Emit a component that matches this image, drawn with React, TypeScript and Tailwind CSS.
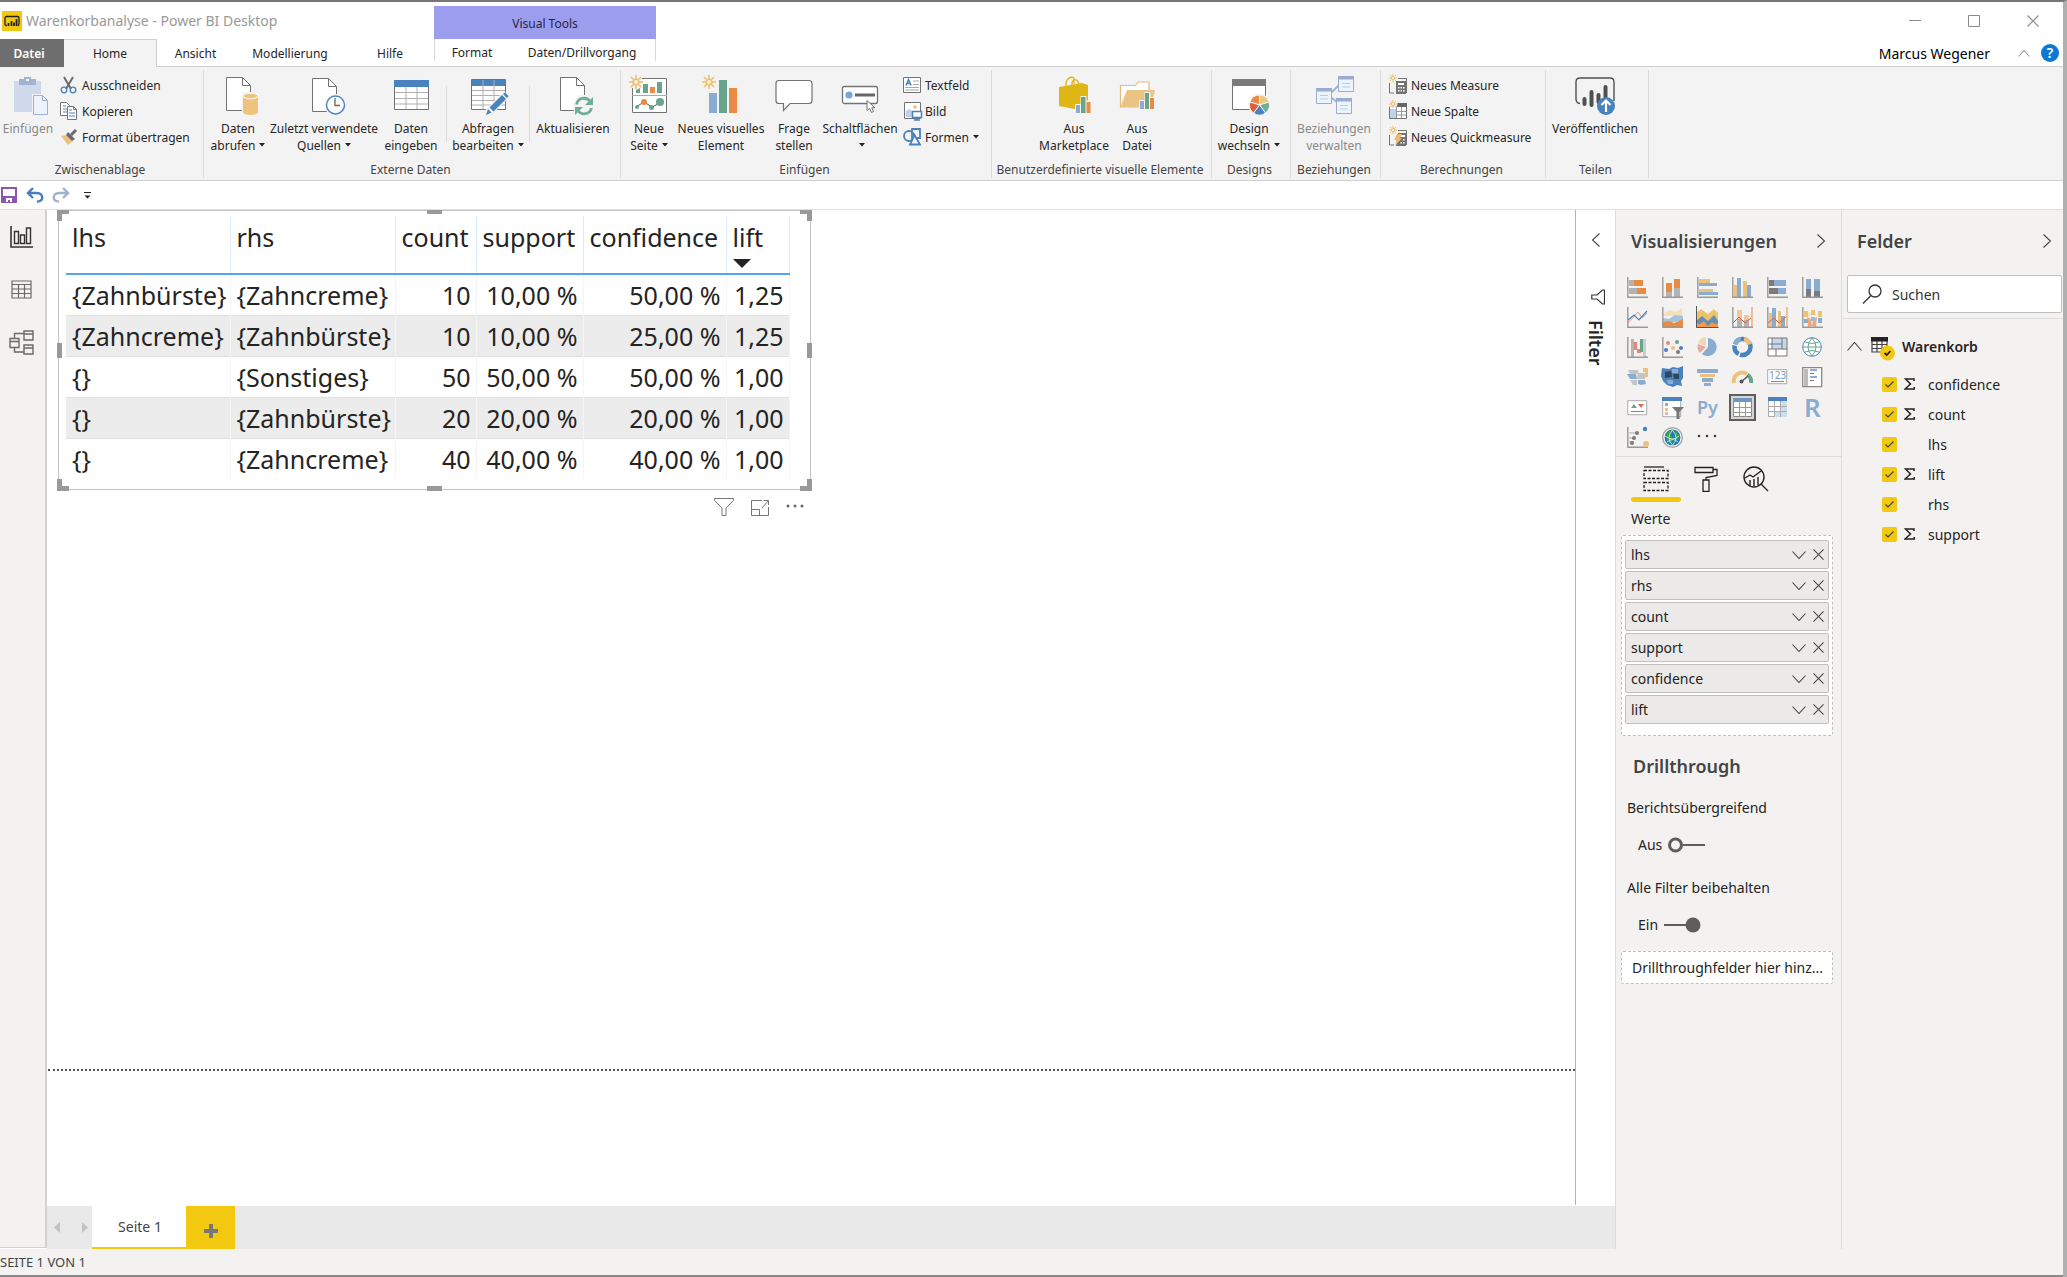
import React, { useState } from 'react';
import clsx from 'clsx';

const RIBBON_TEXT = 'text-[12px] leading-[17px]';

interface RowData {
  lhs: string;
  rhs: string;
  count: string;
  support: string;
  confidence: string;
  lift: string;
}

const rows: RowData[] = [
  { lhs: '{Zahnbürste}', rhs: '{Zahncreme}', count: '10', support: '10,00 %', confidence: '50,00 %', lift: '1,25' },
  { lhs: '{Zahncreme}', rhs: '{Zahnbürste}', count: '10', support: '10,00 %', confidence: '25,00 %', lift: '1,25' },
  { lhs: '{}', rhs: '{Sonstiges}', count: '50', support: '50,00 %', confidence: '50,00 %', lift: '1,00' },
  { lhs: '{}', rhs: '{Zahnbürste}', count: '20', support: '20,00 %', confidence: '20,00 %', lift: '1,00' },
  { lhs: '{}', rhs: '{Zahncreme}', count: '40', support: '40,00 %', confidence: '40,00 %', lift: '1,00' },
];

const fields = [
  { name: 'confidence', numeric: true },
  { name: 'count', numeric: true },
  { name: 'lhs', numeric: false },
  { name: 'lift', numeric: true },
  { name: 'rhs', numeric: false },
  { name: 'support', numeric: true },
];

const values = ['lhs', 'rhs', 'count', 'support', 'confidence', 'lift'];

/* ---------- shared drawing parts ---------- */

function Page({ x, y }: { x: number; y: number }) {
  return (
    <g transform={`translate(${x} ${y})`} fill="#fff" stroke="#737373">
      <path d="M.5.5h16l8 8v25h-24z" />
      <path d="M16.500.5v8h8" fill="none" />
    </g>
  );
}

function Sun({ x, y, s = 1 }: { x: number; y: number; s?: number }) {
  return (
    <g transform={`translate(${x} ${y}) scale(${s})`} stroke="#ecc06e" strokeWidth="1.6" fill="#f9f1e0">
      <path d="M0-7V-3M0 3V7M-7 0H-3M3 0H7M-5-5-2.500-2.500M2.500 2.500 5 5M5-5 2.500-2.500M-2.500 2.500-5 5" />
      <circle r="2.800" />
    </g>
  );
}

function Big({ children }: { children: React.ReactNode }) {
  return (
    <svg width="40" height="40" viewBox="0 0 40 40" fill="none" className="shrink-0 overflow-visible">
      {children}
    </svg>
  );
}

function Small({ children, size = 18 }: { children: React.ReactNode; size?: number }) {
  return (
    <svg width={size} height={size} viewBox={`0 0 ${size} ${size}`} fill="none" className="shrink-0 overflow-visible">
      {children}
    </svg>
  );
}

const Caret = () => (
  <svg width="6" height="4" viewBox="0 0 6 4" className="inline-block ml-1 mb-[3px]">
    <path d="M0 0h6L3 3.500z" fill="#222" />
  </svg>
);

function Chevron({ dir, w = 14, h = 8, color = '#444' }: { dir: 'up' | 'down' | 'left' | 'right'; w?: number; h?: number; color?: string }) {
  const d = {
    up: `M.5 ${h - 0.5}L${w / 2} .5L${w - 0.5} ${h - 0.5}`,
    down: `M.5 .5L${w / 2} ${h - 0.5}L${w - 0.5} .5`,
    left: `M${w - 0.5} .5L.5 ${h / 2}L${w - 0.5} ${h - 0.5}`,
    right: `M.5 .5L${w - 0.5} ${h / 2}L.5 ${h - 0.5}`,
  }[dir];
  return (
    <svg width={w} height={h} viewBox={`0 0 ${w} ${h}`} fill="none" stroke={color} strokeWidth="1.100">
      <path d={d} />
    </svg>
  );
}

const X = ({ s, color }: { s: number; color: string }) => (
  <svg width={s} height={s} viewBox="0 0 12 12" fill="none" stroke={color} strokeWidth="1.100">
    <path d="M.5.5l11 11M11.500.5l-11 11" />
  </svg>
);

/* ---------- ribbon ---------- */

interface BigButtonProps {
  icon: React.ReactNode;
  line1: string;
  line2?: string;
  caret?: boolean;
  disabled?: boolean;
  width: string;
}

function BigButton({ icon, line1, line2, caret, disabled, width }: BigButtonProps) {
  return (
    <button
      disabled={disabled}
      className={clsx('flex flex-col items-center shrink-0 whitespace-nowrap pt-[6px]', RIBBON_TEXT, width, disabled ? 'text-[#8a8a8a]' : 'text-[#262626]')}
    >
      {icon}
      <span className="mt-1">{line1}</span>
      <span>
        {line2}
        {caret && <Caret />}
      </span>
    </button>
  );
}

function SmallButton({ icon, label, caret }: { icon: React.ReactNode; label: string; caret?: boolean }) {
  return (
    <button className={clsx('flex items-center gap-1 h-[26px] whitespace-nowrap text-[#262626]', RIBBON_TEXT)}>
      {icon}
      <span>
        {label}
        {caret && <Caret />}
      </span>
    </button>
  );
}

function Group({ label, width, children }: { label: string; width: string; children: React.ReactNode }) {
  return (
    <div className={clsx('flex flex-col shrink-0 mt-[3px] mb-[2px] border-r border-[#dcdcdc]', width)}>
      <div className="flex flex-1 items-start">{children}</div>
      <div className={clsx('pr-[3px] text-center text-[#444] whitespace-nowrap', RIBBON_TEXT)}>{label}</div>
    </div>
  );
}

const InnerDivider = () => <div className="w-px h-14 mt-4 bg-[#dcdcdc] shrink-0" />;

const icons = {
  paste: (
    <Big>
      <path d="M6 5h27v31H6z" fill="#cfd9ea" />
      <path d="M11 3h5V1h7v2h5v6H11z" fill="#a2b3d2" />
      <path d="M18 3h3v2h-3z" fill="#f3f3f3" />
      <path d="M25.500 19.500h9l5 5v14h-14z" fill="#ecf3fc" stroke="#f3f3f3" strokeWidth="3" />
      <path d="M25.500 19.500h9l5 5v14h-14zM34.500 19.500v5h5" fill="#ecf3fc" stroke="#9bb0d2" />
    </Big>
  ),
  cut: (
    <Small>
      <path d="M4 1l7 12M13 1L6 13" stroke="#6b6b6b" strokeWidth="2" />
      <circle cx="4" cy="14" r="2.800" stroke="#4a82bd" strokeWidth="1.300" />
      <circle cx="13" cy="14" r="2.800" stroke="#4a82bd" strokeWidth="1.300" />
    </Small>
  ),
  copy: (
    <Small>
      <path d="M.5.5h6l3 3v10h-9z" fill="#fff" stroke="#737373" />
      <path d="M3 4h3M3 7h4M3 10h4" stroke="#4a82bd" />
      <path d="M7.500 4.500h6l3 3v10h-9z" fill="#fff" stroke="#737373" />
      <path d="M9 8h3M9 11h6M9 14h6M13.500 4.500v3h3" stroke="#4a82bd" />
    </Small>
  ),
  brush: (
    <Small>
      <path d="M1 8l6-1 6 6-5 4z" fill="#ecc183" />
      <path d="M8 4l7 7-3 2-6-6z" fill="#6b6b6b" />
      <path d="M11 7l5-5" stroke="#6b6b6b" strokeWidth="3" />
    </Small>
  ),
  getData: (
    <Big>
      <Page x={8} y={1} />
      <path d="M24 16h17v24H24z" fill="#f3f3f3" />
      <path d="M25 20v16c0 4 15 4 15 0V20z" fill="#eec47c" />
      <ellipse cx="32.500" cy="20" rx="7.500" ry="2.800" fill="#eec47c" stroke="#fff" />
    </Big>
  ),
  recent: (
    <Big>
      <Page x={8} y={2} />
      <circle cx="31.500" cy="29" r="9" fill="#fff" stroke="#f3f3f3" strokeWidth="4" />
      <circle cx="31.500" cy="29" r="9" fill="#fff" stroke="#4a82bd" strokeWidth="1.400" />
      <path d="M31 22v7.500h5" stroke="#666" strokeWidth="1.300" />
    </Big>
  ),
  enterData: (
    <Big>
      <path d="M3.500 4.500h34v29h-34z" fill="#fff" stroke="#737373" />
      <path d="M3 4h35v7H3z" fill="#4a82bd" />
      <path d="M15 11v22M26 11v22M4 16.500h33M4 22.500h33M4 28h33" stroke="#b0b0b0" />
    </Big>
  ),
  editQueries: (
    <Big>
      <path d="M3.500 3.500h34v30h-34z" fill="#fff" stroke="#737373" />
      <path d="M4 4h33v6H4z" fill="#4a82bd" />
      <path d="M15 4v29M26 4v29M4 14.500h33M4 19.500h33M4 24.500h33M4 29h33" stroke="#b0b0b0" />
      <path d="M19 38L39 18" stroke="#f3f3f3" strokeWidth="8" />
      <path d="M18 39l2-6 3.500 3.500zM21.500 31.500L34 19l4 4-12.500 12.500zM35 18l2-1.500 3.500 3.500-1.500 2z" fill="#4a82bd" />
    </Big>
  ),
  refresh: (
    <Big>
      <Page x={7} y={1} />
      <circle cx="31" cy="30" r="11" fill="#f3f3f3" />
      <path d="M23.500 28.500c1.500-7 10-8.500 14-2.500M38.500 32c-1.500 6.500-10 8-14 2" stroke="#6fae96" strokeWidth="2.800" />
      <path d="M40 21v8h-8zM22 39v-8h8z" fill="#6fae96" />
    </Big>
  ),
  newPage: (
    <Big>
      <path d="M3.500 2.500h34v34h-34z" fill="#fff" stroke="#737373" />
      <path d="M3 19.500h35" stroke="#aaa" />
      <path d="M7 17v-3l4-2v5zM14 8h5v9h-5zM28 6h5v11h-5z" fill="#68a58c" />
      <path d="M21 11h5v6h-5z" fill="#e98b45" />
      <path d="M7 31l8-5 8 5 8-4" stroke="#555" />
      <circle cx="8" cy="31" r="2" fill="#68a58c" />
      <circle cx="15" cy="26" r="3" fill="#e98b45" />
      <circle cx="22.500" cy="31.500" r="2.500" fill="#68a58c" />
      <circle cx="31" cy="26" r="4" fill="#68a58c" />
      <circle cx="7" cy="6" r="7" fill="#f3f3f3" />
      <Sun x={7} y={6} />
    </Big>
  ),
  newVisual: (
    <Big>
      <path d="M8 17h8v20H8z" fill="#8bacd2" />
      <path d="M18 4h8v33h-8z" fill="#68a58c" />
      <path d="M28 12h8v25h-8z" fill="#e98b45" />
      <Sun x={8} y={6} />
    </Big>
  ),
  ask: (
    <Big>
      <path d="M5 4.500h30q3 0 3 3v17q0 3-3 3H16L9.500 34.500V27.500H5q-3 0-3-3v-17q0-3 3-3z" fill="#fff" stroke="#737373" strokeWidth="1.200" />
    </Big>
  ),
  buttons: (
    <Big>
      <rect x="2.500" y="10.500" width="35" height="17" rx="2" fill="#fff" stroke="#737373" strokeWidth="1.300" />
      <circle cx="9" cy="19" r="3.600" fill="#71a8d8" />
      <path d="M15 19h20" stroke="#666" strokeWidth="3" />
      <path d="M27 24.500v10l2.500-2 2 4 2-1-1.700-3.700h3z" fill="#fff" stroke="#737373" />
    </Big>
  ),
  textbox: (
    <Small>
      <path d="M.5 1.500h17v15H.5z" fill="#fff" stroke="#737373" />
      <path d="M3 9.500L5.500 3.500L8 9.500M4 7.500h3" stroke="#4a82bd" strokeWidth="1.500" />
      <path d="M10 5h6M10 8.500h6M2 11.500h14M2 14h14" stroke="#aaa" />
    </Small>
  ),
  image: (
    <Small>
      <path d="M1.500 0.500h16v16h-16z" fill="#fff" stroke="#737373" />
      <path d="M3 15V9l3-2 3 2v6z" fill="#bfd0e6" />
      <circle cx="12" cy="5" r="1.800" fill="#ecc06e" />
      <path d="M9.500 9.500h9v6h-9z" fill="#fff" stroke="#4a82bd" strokeWidth="1.500" />
      <path d="M14 15v3M11 18h6" stroke="#4a82bd" strokeWidth="1.500" />
    </Small>
  ),
  shapes: (
    <Small>
      <circle cx="6" cy="8" r="5" stroke="#4a82bd" strokeWidth="1.800" />
      <path d="M9 1h8v9H9z" stroke="#4a82bd" strokeWidth="1.800" />
      <path d="M11.500 7L17 16.500H7z" fill="#f3f3f3" stroke="#4a82bd" strokeWidth="1.800" />
    </Small>
  ),
  marketplace: (
    <Big>
      <path d="M12 10c-1-7 5-10 8-8v6M18 9c-1-6 6-8 7 0" stroke="#dfb613" strokeWidth="1.300" />
      <path d="M5 11l23-4 6 2v21l-8 4-21-4z" fill="#dfb613" />
      <path d="M21 28h5.500v-8h6v4.500h4.500V38H21z" fill="#f3f3f3" />
      <path d="M22 29h4v8h-4z" fill="#8bacd2" />
      <path d="M27 21h4.500v16H27z" fill="#68a58c" />
      <path d="M32.500 26h4v11h-4z" fill="#e98b45" />
    </Big>
  ),
  file: (
    <Big>
      <path d="M3.500 31V9.500h15l2.500-3.500h11v25z" fill="#fff" stroke="#e8bb7c" strokeWidth="1.200" />
      <path d="M3.500 31L10 14h28l-4 17z" fill="#ebc385" />
      <path d="M22 24h5.500v-8h6v5H38v13H22z" fill="#f3f3f3" />
      <path d="M23 25h4v8h-4z" fill="#8bacd2" />
      <path d="M28 17h4v16h-4z" fill="#68a58c" />
      <path d="M33 22h4v11h-4z" fill="#e98b45" />
    </Big>
  ),
  theme: (
    <Big>
      <path d="M3.500 3.500h33v30h-33z" fill="#fff" stroke="#737373" />
      <path d="M3 3h34v7H3z" fill="#7a7a7a" />
      <circle cx="30.500" cy="29" r="11" fill="#f3f3f3" />
      <g stroke="#f3f3f3" strokeWidth="1" transform="translate(30.500 29)">
        <path d="M0 0V-10A10 10 0 0 0-9.500-3z" fill="#e98b45" />
        <path d="M0 0V-10A10 10 0 0 1 9.500-3z" fill="#ecc87c" />
        <path d="M0 0L9.500-3A10 10 0 0 1 6 8z" fill="#6fae96" />
        <path d="M0 0L6 8A10 10 0 0 1-6 8z" fill="#4a82bd" />
        <path d="M0 0L-9.500-3A10 10 0 0 0-6 8z" fill="#dd5f41" />
      </g>
    </Big>
  ),
  relations: (
    <Big>
      <path d="M18 16l8-8M18 22l6 5" stroke="#a2b3d2" strokeWidth="2" />
      {[[2, 12], [24, 0], [22, 22]].map(([x, y]) => (
        <g key={x} transform={`translate(${x} ${y})`}>
          <path d="M.5.5h15v15H.5z" fill="#ecf5fe" stroke="#9bacd0" />
          <path d="M0 0h16v3.500H0z" fill="#9bacd0" />
          <path d="M4 7.500h8M4 11h8" stroke="#b9cbe8" />
        </g>
      ))}
    </Big>
  ),
  measure: (
    <Small>
      <path d="M.5 7v10H5M9 2.500h8.500V17" stroke="#737373" />
      <path d="M7 5h10v13H7z" fill="#737373" />
      <path d="M9 7h6v2H9zM9 11h1.500v1.500H9zM11.500 11H13v1.500h-1.500zM14 11h1.500v1.500H14zM9 14h1.500v1.500H9zM11.500 14H13v1.500h-1.500zM14 14h1.500v1.500H14z" fill="#fff" />
      <Sun x={4} y={2} s={0.6} />
    </Small>
  ),
  column: (
    <Small>
      <path d="M.5 2.500h17v14H.5z" fill="#fff" stroke="#737373" />
      <path d="M7 1h11v4H7z" fill="#666" />
      <path d="M1 7h6v9H1z" fill="#bfd3ea" />
      <path d="M7.500 5v11M12.500 5v11M7 9.500h10M7 13h10" stroke="#999" />
      <circle cx="4" cy="2" r="4.500" fill="#f3f3f3" />
      <Sun x={4} y={2} s={0.6} />
    </Small>
  ),
  quick: (
    <Small>
      <path d="M.5 7v10H5M9 2.500h8.500V17" stroke="#737373" />
      <path d="M9 5h8v13H7z" fill="#737373" />
      <path d="M11 7h5v2h-5zM14 11h1.500v1.500H14zM14 14h1.500v1.500H14zM11.500 14H13v1.500h-1.500z" fill="#fff" />
      <path d="M8 6h5l-2 4h2l-7 8 1.500-6H5z" fill="#eeb968" />
      <Sun x={4} y={2} s={0.6} />
    </Small>
  ),
  publish: (
    <Big>
      <path d="M5 27.500Q1 27 1 23V6q0-4 4-4h30q4 0 4 4v19" stroke="#505050" strokeWidth="1.400" />
      <path d="M9.500 23v5M16.500 16v13M23.500 19v7M30.500 11v10" stroke="#505050" strokeWidth="4" strokeLinecap="round" />
      <circle cx="31" cy="30" r="9" fill="#4a82bd" />
      <path d="M31 36V25M26.500 29l4.500-4.500 4.500 4.500" stroke="#fff" strokeWidth="2.200" />
    </Big>
  ),
};

function Ribbon() {
  return (
    <div className="flex h-[114px] shrink-0 bg-[#f3f3f3] border-b border-[#cfcfcf]">
      <Group label="Zwischenablage" width="w-[204px]">
        <BigButton icon={icons.paste} line1="Einfügen" width="w-14" disabled />
        <div className="flex flex-col pt-[2px] pl-1">
          <SmallButton icon={icons.cut} label="Ausschneiden" />
          <SmallButton icon={icons.copy} label="Kopieren" />
          <SmallButton icon={icons.brush} label="Format übertragen" />
        </div>
      </Group>
      <Group label="Externe Daten" width="w-[417px]">
        <BigButton icon={icons.getData} line1="Daten" line2="abrufen" caret width="w-[68px]" />
        <BigButton icon={icons.recent} line1="Zuletzt verwendete" line2="Quellen" caret width="w-[104px]" />
        <BigButton icon={icons.enterData} line1="Daten" line2="eingeben" width="w-[70px]" />
        <InnerDivider />
        <BigButton icon={icons.editQueries} line1="Abfragen" line2="bearbeiten" caret width="w-[82px]" />
        <InnerDivider />
        <BigButton icon={icons.refresh} line1="Aktualisieren" width="w-[86px]" />
      </Group>
      <Group label="Einfügen" width="w-[371px]">
        <BigButton icon={icons.newPage} line1="Neue" line2="Seite" caret width="w-14" />
        <BigButton icon={icons.newVisual} line1="Neues visuelles" line2="Element" width="w-[88px]" />
        <BigButton icon={icons.ask} line1="Frage" line2="stellen" width="w-[58px]" />
        <BigButton icon={icons.buttons} line1="Schaltflächen" caret width="w-[74px]" />
        <div className="flex flex-col pt-[2px] pl-[6px]">
          <SmallButton icon={icons.textbox} label="Textfeld" />
          <SmallButton icon={icons.image} label="Bild" />
          <SmallButton icon={icons.shapes} label="Formen" caret />
        </div>
      </Group>
      <Group label="Benutzerdefinierte visuelle Elemente" width="w-[220px]">
        <div className="flex pl-[42px]">
          <BigButton icon={icons.marketplace} line1="Aus" line2="Marketplace" width="w-20" />
          <BigButton icon={icons.file} line1="Aus" line2="Datei" width="w-[46px]" />
        </div>
      </Group>
      <Group label="Designs" width="w-[79px]">
        <BigButton icon={icons.theme} line1="Design" line2="wechseln" caret width="w-[74px]" />
      </Group>
      <Group label="Beziehungen" width="w-[90px]">
        <BigButton icon={icons.relations} line1="Beziehungen" line2="verwalten" width="w-[86px]" disabled />
      </Group>
      <Group label="Berechnungen" width="w-[165px]">
        <div className="flex flex-col pt-[2px] pl-2">
          <SmallButton icon={icons.measure} label="Neues Measure" />
          <SmallButton icon={icons.column} label="Neue Spalte" />
          <SmallButton icon={icons.quick} label="Neues Quickmeasure" />
        </div>
      </Group>
      <Group label="Teilen" width="w-[103px]">
        <BigButton icon={icons.publish} line1="Veröffentlichen" width="w-[98px]" />
      </Group>
    </div>
  );
}

function TitleBar() {
  return (
    <div className="flex h-[37px] shrink-0">
      <div className="w-[434px] flex items-center gap-1 pl-[2px] text-[14px] text-[#999] whitespace-nowrap">
        <svg width="20" height="20" viewBox="0 0 20 20" fill="none">
          <path d="M0 0h20v20H0z" fill="#f2c811" />
          <path d="M5 14.500H4.500Q3 14.500 3 13V7q0-1.500 1.500-1.500h11Q17 5.500 17 7v6q0 1.500-1.500 1.500" stroke="#222" strokeWidth="1.300" />
          <path d="M6.500 12v3M9.500 10v5M12 11.500V15M14.500 8v7" stroke="#222" strokeWidth="1.800" />
        </svg>
        <span>Warenkorbanalyse - Power BI Desktop</span>
      </div>
      <div className={clsx('w-[222px] mt-1 pt-[2px] bg-[#9d9dee] flex items-center justify-center text-[#262640]', RIBBON_TEXT)}>
        Visual Tools
      </div>
      <div className="flex ml-auto mr-px">
        <button aria-label="Minimieren" className="w-[59px] flex items-center justify-center">
          <svg width="12" height="12"><path d="M0 5.500h12" stroke="#8a8a8a" /></svg>
        </button>
        <button aria-label="Maximieren" className="w-[59px] flex items-center justify-center">
          <svg width="12" height="12" fill="none"><path d="M.5.5h11v11H.5z" stroke="#8a8a8a" /></svg>
        </button>
        <button aria-label="Schließen" className="w-[59px] flex items-center justify-center">
          <X s={12} color="#8a8a8a" />
        </button>
      </div>
    </div>
  );
}

function RibbonTabs() {
  return (
    <nav className={clsx('flex h-7 shrink-0 text-[#262626] shadow-[inset_0_-1px_0_#cfcfcf]', RIBBON_TEXT)}>
      <button className="w-16 pr-[6px] bg-[#6e6e6e] text-white font-semibold">Datei</button>
      <button className="w-[93px] bg-[#f3f3f3] border-t border-r border-[#cfcfcf]">Home</button>
      <button className="w-[77px]">Ansicht</button>
      <button className="w-28">Modellierung</button>
      <button className="w-[88px]">Hilfe</button>
      <div className="flex w-[222px] h-[22px] pt-1 border-x border-[#d8d8d8] items-start">
        <button className="w-[74px] mt-px">Format</button>
        <button className="flex-1 mt-px">Daten/Drillvorgang</button>
      </div>
      <div className="ml-auto flex items-center pr-1">
        <span className="text-[14px] text-black mr-7">Marcus Wegener</span>
        <button aria-label="Menüband minimieren" className="mr-[11px]">
          <Chevron dir="up" w={12} h={7} color="#999" />
        </button>
        <button aria-label="Hilfe" className="w-[18px] h-[18px] rounded-full bg-[#0b78d4] text-white text-[14px] font-semibold leading-[18px]">
          ?
        </button>
      </div>
    </nav>
  );
}

function QuickAccess() {
  return (
    <div className="flex items-center h-[29px] shrink-0 border-b border-[#e0e0e0] pl-px">
      <button aria-label="Speichern">
        <svg width="16" height="16" fill="none">
          <path d="M1 1h14v14H1z" stroke="#8a57ae" strokeWidth="2" fill="#fff" />
          <path d="M2 9h12v6H2z" fill="#8a57ae" />
          <path d="M5 11h6v4H9v-2H7v2H5z" fill="#fff" />
        </svg>
      </button>
      <button aria-label="Rückgängig" className="ml-[9px]">
        <svg width="18" height="16" fill="none" stroke="#4a7ebb" strokeWidth="2.400">
          <path d="M7 1L2 6l5 5M2 6h9c7 0 7 9 0 8.500" />
        </svg>
      </button>
      <button aria-label="Wiederholen" className="ml-2">
        <svg width="18" height="16" fill="none" stroke="#9fb3cf" strokeWidth="2.400">
          <path d="M11 1l5 5-5 5M16 6H7c-7 0-7 9 0 8.500" />
        </svg>
      </button>
      <button aria-label="Symbolleiste anpassen" className="ml-[14px]">
        <svg width="7" height="7"><path d="M0 0h7v1H0zM.5 3.500h6L3.500 6.500z" fill="#222" /></svg>
      </button>
    </div>
  );
}

/* ---------- report canvas ---------- */

function SideRail() {
  return (
    <aside className="w-[47px] shrink-0 bg-[#f3f2f1] border-r-2 border-b border-[#d4d2d0] flex flex-col items-center pt-4 pr-[2px] mb-px">
      <button aria-label="Bericht">
        <svg width="23" height="23" fill="none" stroke="#333" strokeWidth="1.600">
          <path d="M1 0v21h22" />
          <path d="M4.500 5.500h4v12h-4zM10.500 9h4v8.500h-4zM16.500 2h4v15.500h-4z" strokeWidth="1.400" />
        </svg>
      </button>
      <button aria-label="Daten" className="mt-[31px]">
        <svg width="21" height="19" fill="none" stroke="#6a6a6a" strokeWidth="1.200">
          <path d="M1 1h19v17H1zM1 4.500h19M1 9h19M1 13.500h19M7.500 4.500V18M13.500 4.500V18" />
        </svg>
      </button>
      <button aria-label="Modell" className="mt-[31px]">
        <svg width="25" height="25" fill="none" stroke="#6a6a6a" strokeWidth="1.400">
          <path d="M1 8.500h9v9H1zM1 11.500h9M15 1h9v9h-9zM15 4h9M15 15h9v9h-9zM15 18h9M5.500 8V3.500H15M5.500 18v4H15" />
        </svg>
      </button>
    </aside>
  );
}

function Handles() {
  return (
    <svg width="755" height="281" viewBox="0 0 755 281" fill="#999" className="absolute -left-[2px] -top-px pointer-events-none">
      <path d="M0 0h12v4H5v7H0zM743 0h12v11h-5V4h-7zM0 281h12v-5H5v-7H0zM755 281h-12v-5h7v-7h5z" />
      <path d="M370 0h15v4h-15zM370 276h15v5h-15zM0 133h5v15H0zM750 133h5v15h-5z" />
    </svg>
  );
}

const th = 'relative border-r border-[#dbeaf8] font-normal align-top pt-[4px] px-[6px] text-left';
const tdText = 'px-[6px] border-r border-[#f5f5f5]';
const tdNumber = 'pl-[6px] pr-[5px] border-r border-[#f5f5f5] text-right';

function DataVisual() {
  return (
    <div className="relative w-[753px] h-[280px] ml-[11px] border border-[#c4c4c4] pl-[7px] pt-[5px] bg-white">
      <table className="table-fixed w-[723px] border-collapse text-[25px] leading-[34px] text-[#252423] whitespace-nowrap">
        <thead>
          <tr className="h-[58px] border-b-2 border-[#54a5ee]">
            <th className={clsx(th, 'w-[164px]')}>lhs</th>
            <th className={clsx(th, 'w-[165px]')}>rhs</th>
            <th className={clsx(th, 'w-[81px]')}>count</th>
            <th className={clsx(th, 'w-[107px]')}>support</th>
            <th className={clsx(th, 'w-[143px]')}>confidence</th>
            <th className={clsx(th, 'w-[63px]')}>
              lift
              <svg width="18" height="9" className="absolute left-[6px] bottom-[5px]"><path d="M0 0h18L9 9z" fill="#252423" /></svg>
            </th>
          </tr>
        </thead>
        <tbody>
          {rows.map((row, i) => (
            <tr key={i} className={clsx('h-[41px]', i % 2 === 1 && 'bg-[#ececec] border-y border-[#e0e0e0]')}>
              <td className={tdText}>{row.lhs}</td>
              <td className={tdText}>{row.rhs}</td>
              <td className={tdNumber}>{row.count}</td>
              <td className={tdNumber}>{row.support}</td>
              <td className={tdNumber}>{row.confidence}</td>
              <td className={tdNumber}>{row.lift}</td>
            </tr>
          ))}
        </tbody>
      </table>
      <Handles />
    </div>
  );
}

function Canvas() {
  return (
    <div className="flex-1 min-w-0 flex flex-col bg-white border-r border-[#b3b3b3] mb-px">
      <div className="flex-1 min-h-0 flex flex-col">
        <DataVisual />
        <div className="flex items-center justify-end w-[757px] mt-2 gap-[17px]">
          <button aria-label="Filter">
            <svg width="20" height="18" fill="none" stroke="#777"><path d="M.5.5h19v2L12 10v7.500H8V10L.5 2.500z" /></svg>
          </button>
          <button aria-label="Fokusmodus" className="mt-[2px]">
            <svg width="18" height="16" fill="none" stroke="#777">
              <path d="M11 .5H.5v15h17V7M.5 9.500h8v6M11 8l6-7M12.500.5h5V5" />
            </svg>
          </button>
          <button aria-label="Weitere Optionen" className="-mt-[2px]">
            <svg width="18" height="4" fill="#666"><circle cx="2" cy="2" r="1.500" /><circle cx="9" cy="2" r="1.500" /><circle cx="16" cy="2" r="1.500" /></svg>
          </button>
        </div>
      </div>
      <div className="ml-px h-[136px] border-t-2 border-dotted border-[#555]" />
    </div>
  );
}

function FilterPane() {
  return (
    <div className="w-[39px] shrink-0 bg-white flex flex-col items-center pt-[23px]">
      <button aria-label="Filter erweitern">
        <Chevron dir="left" w={8} h={14} />
      </button>
      <svg width="14" height="16" fill="none" stroke="#333" strokeWidth="1.200" className="mt-[42px] ml-1">
        <path d="M13.500 1v14h-2L6 10H.8V6H6l5.500-5z" />
      </svg>
      <span className="mt-[15px] text-[18px] leading-[22px] font-semibold text-[#252423] [writing-mode:vertical-rl]">Filter</span>
    </div>
  );
}

function PageTabs() {
  return (
    <div className="flex h-[43px] shrink-0 bg-[#e9e9e9]">
      <div className="w-[45px] flex items-center justify-between pl-[7px] pr-1">
        <button aria-label="Vorherige Seite"><svg width="6" height="11"><path d="M6 0v11L0 5.500z" fill="#c2c2c2" /></svg></button>
        <button aria-label="Nächste Seite"><svg width="6" height="11"><path d="M0 0v11l6-5.500z" fill="#c2c2c2" /></svg></button>
      </div>
      <button className="w-[94px] pl-[2px] bg-white border-b-2 border-[#f2c811] text-[14px] text-[#444]">Seite 1</button>
      <button aria-label="Neue Seite" className="w-[49px] bg-[#f2c811] flex items-center justify-center pt-[6px]">
        <svg width="14" height="14"><path d="M5 0h4v5h5v4H9v5H5V9H0V5h5z" fill="#777" /></svg>
      </button>
    </div>
  );
}

/* ---------- visualizations pane ---------- */

const Axis = () => <path d="M.8 0V20.200H21" stroke="#999" strokeWidth="1.400" />;

const O = '#e98b45';
const B = '#8bacd2';
const G = '#b3b3b3';
const Y = '#ecc17a';
const D = '#7b7b7b';
const DB = '#4a82bd';

const r = (x: number, y: number, w: number, h: number, fill: string) => <rect key={`${x}-${y}-${fill}`} x={x} y={y} width={w} height={h} fill={fill} />;

const visuals: { name: string; icon: React.ReactNode }[] = [
  { name: 'Gestapeltes Balkendiagramm', icon: <>{r(2, 3, 5, 6, G)}{r(7, 3, 9, 6, O)}{r(2, 11, 8, 6, G)}{r(10, 11, 9, 6, O)}<Axis /></> },
  { name: 'Gestapeltes Säulendiagramm', icon: <>{r(4, 6, 6, 9, O)}{r(4, 15, 6, 5, G)}{r(12, 2, 6, 9, O)}{r(12, 11, 6, 9, G)}<Axis /></> },
  { name: 'Gruppiertes Balkendiagramm', icon: <>{r(2, 2, 11, 4, Y)}{r(2, 6, 18, 3, B)}{r(2, 12, 14, 3, Y)}{r(2, 15, 19, 3, B)}<Axis /></> },
  { name: 'Gruppiertes Säulendiagramm', icon: <>{r(2, 8, 3, 12, Y)}{r(5, 1, 4, 19, B)}{r(11, 4, 4, 16, Y)}{r(15, 8, 4, 12, B)}<Axis /></> },
  { name: '100% gestapelte Balken', icon: <>{r(2, 3, 5, 6, D)}{r(7, 3, 12, 6, B)}{r(2, 11, 9, 6, D)}{r(11, 11, 8, 6, B)}<Axis /></> },
  { name: '100% gestapelte Säulen', icon: <>{r(4, 2, 5, 10, B)}{r(4, 12, 5, 8, D)}{r(12, 2, 6, 12, B)}{r(12, 14, 6, 6, D)}<Axis /></> },

  { name: 'Liniendiagramm', icon: <><Axis /><path d="M1 16L11 5l4 6 5-5" stroke="#e79a90" /><path d="M1 13l6-5 5 5 8-9" stroke={DB} strokeWidth="1.200" /></> },
  { name: 'Flächendiagramm', icon: <><path d="M1 7l7-4 6 2 6-4v8H1z" fill="#f3dfb8" /><path d="M1 11l6 1 6-4 8 1v4l-8 2-12 1z" fill="#a4c4de" /><path d="M1 15l6-1 5 2 9-4v8H1z" fill={O} /><Axis /></> },
  { name: 'Gestapeltes Flächendiagramm', icon: <><path d="M-1 6l5-4 7 5 6-5 4 4v8H-1z" fill="#efc36c" /><path d="M-1 14l6-5 6 5 6-6 4 6v6H-1z" fill="#648fb5" /><path d="M-1 16l4 1 4-3 4 5 4-4 3 2 3-1v5H-1z" fill="#f09850" /><path d="M-.5-1V20.500H21.500" stroke="#555" /></> },
  { name: 'Linien und gestapelte Säulen', icon: <>{r(5, 3, 5, 9, '#f1c6a0')}{r(5, 12, 5, 8, G)}{r(12, 8, 5, 6, '#f1c6a0')}{r(12, 13, 5, 7, G)}<Axis /><path d="M1 16l6-6 6 6 6-5" stroke="#e2603f" /><path d="M20 0v20" stroke={O} /></> },
  { name: 'Linien und gruppierte Säulen', icon: <>{r(2, 6, 3, 14, Y)}{r(5, 1, 4, 19, B)}{r(11, 4, 3, 16, Y)}{r(14, 9, 4, 11, B)}<Axis /><path d="M1 16l6-5 5 5 7-6" stroke="#e2603f" /><path d="M20 0v20" stroke={O} /></> },
  { name: 'Menübanddiagramm', icon: <><path d="M6 5l4 1 4-1v4l-4-1-4 2z" fill="#f3e3c4" /><path d="M5 10l4 2 1 7-4 1zM15 10l-4 2-1 7 4 1z" fill="#f0a878" />{r(2, 4, 4, 6, Y)}{r(9, 3, 4, 5, Y)}{r(16, 4, 4, 6, Y)}{r(2, 12, 4, 4, B)}{r(9, 10, 4, 4, '#9dbbdb')}{r(16, 11, 4, 5, B)}<Axis /></> },

  { name: 'Wasserfalldiagramm', icon: <>{r(4, 2, 3, 18, G)}{r(7, 5, 3, 8, '#e38777')}{r(10, 12, 4, 4, '#e38777')}{r(13, 2, 3, 13, '#68a58c')}{r(16, 2, 3, 18, '#ccc')}<Axis /></> },
  { name: 'Punktdiagramm', icon: <><Axis /><circle cx="6" cy="6" r="2" fill="#e38777" /><circle cx="15" cy="5" r="2" fill="#68a58c" /><circle cx="11" cy="11" r="2" fill={Y} /><circle cx="19" cy="11" r="2" fill={DB} /><circle cx="4" cy="13" r="2" fill={DB} /><circle cx="16" cy="15" r="2" fill={D} /></> },
  { name: 'Kreisdiagramm', icon: <><path d="M11 10V1a9 9 0 1 1-6 16z" fill={B} /><path d="M9 9V0A9 9 0 0 0 1 6z" fill="#f0d9b0" /><path d="M9 10L1 7a9 9 0 0 0 2 9z" fill="#e9aaa0" /></> },
  { name: 'Ringdiagramm', icon: <g fill="none" strokeWidth="4.500"><circle cx="10.500" cy="10" r="8" stroke={DB} strokeDasharray="15 1.500 10 1.500" /><path d="M12 2.200a8 8 0 0 1 6 5" stroke={Y} /><path d="M3 7.500A8 8 0 0 1 9 2.200" stroke={B} /></g> },
  { name: 'Treemap', icon: <><path d="M1 1h19v18H1z" fill="#fff" /><path d="M5 1h15v11H5z" fill="#c6d7eb" /><path d="M1 1h19v18H1zM5 1v11M1 7h4M1 12h19M15 1v11M5 7h10M9 12v7" stroke="#777" /></> },
  { name: 'Karte', icon: <g fill="#fff"><circle cx="10" cy="10" r="9.300" stroke={DB} /><path d="M1 10h18M3 5q7 3 14 0M3 15q7-3 14 0M10 1q-8 9 0 18M10 1q8 9 0 18" stroke="#68a58c" fill="none" /></g> },

  { name: 'Flächenkartogramm', icon: <><path d="M1 3h10l1 4H3z" fill="#c4c4c4" /><path d="M0 7h9l1 5H3z" fill={B} /><path d="M11 6h7v6h-8zM3 13h7v5H6z" fill="#c4c4c4" /><path d="M16 1h5v9h-3V5h-2z" fill={Y} /><path d="M11 13h7l1 4-5 1-3-1z" fill={B} /></> },
  { name: 'Formenzuordnung', icon: <><path d="M0 1l7 1 4-2 5 1 5-2v12l-2 3 1 5-5-1-4 2-6-2-4-4-2-5z" fill="#4a82bd" /><path d="M3 5l6-1 1 6-7 1zM11 7h6v5h-5z" fill="#31475e" /><path d="M10 2h6v4h-6zM5 13h6v4H6z" fill="#8bacd2" /></> },
  { name: 'Trichter', icon: <>{r(0, 2, 21, 4, B)}{r(3, 7, 15, 3, Y)}{r(5, 11, 11, 4, B)}{r(7, 16, 7, 3, B)}</> },
  { name: 'Messgerät', icon: <><path d="M2 16a8.500 8.500 0 0 1 13-9" stroke={Y} strokeWidth="4" /><path d="M15.500 7.500a9 9 0 0 1 3.500 8.500" stroke="#68a58c" strokeWidth="4" /><path d="M9 15l7-6" stroke="#555" strokeWidth="1.500" /><circle cx="9.500" cy="14.500" r="2" fill="#555" /></> },
  { name: 'Karte 123', icon: <><path d="M.7 2.700h19v14H.7z" fill="#fff" stroke="#aaa" /><text x="2" y="12" fontSize="10" fill="#6e9bcb">123</text><path d="M4 14.500h13" stroke="#888" /></> },
  { name: 'Mehrzeilige Karte', icon: <><path d="M.7.7h19v19H.7z" fill="#fff" stroke="#888" strokeWidth="1.300" />{r(2, 2, 4, 17, '#bbb')}{r(8, 2, 7, 2, B)}{r(8, 6, 4, 1, D)}{r(8, 9, 7, 2, B)}{r(8, 13, 4, 1, D)}</> },

  { name: 'KPI', icon: <><path d="M.7 3.700h19v14H.7z" fill="#fff" stroke="#aaa" /><path d="M4 11l3-4 3 4z" fill="#68a58c" /><path d="M11 7h6l-3 4z" fill="#e06a55" /><path d="M4 14.500h13" stroke="#888" /></> },
  { name: 'Datenschnitt', icon: <><path d="M.7.7h18v19H.7z" fill="#fff" stroke="#aaa" />{r(0, 0, 20, 4, DB)}{r(3, 6, 3, 3, B)}{r(3, 11, 3, 3, Y)}{r(3, 15, 3, 3, '#efb3a8')}<path d="M10 10h12l-4.500 5v7h-3v-7z" fill="#777" /></> },
  { name: 'Python-Visual', icon: <text x="0" y="17" fontSize="18" fontWeight="600" fill={B}>Py</text> },
  { name: 'Tabelle', icon: <><path d="M1.500 1.500h18v18h-18z" fill="#fff" stroke="#888" />{r(1, 1, 19, 4, '#6f97c4')}<path d="M7.500 5v15M13.500 5v15M1 10.500h19M1 15.500h19" stroke="#999" /></> },
  { name: 'Matrix', icon: <><path d="M1.500 1.500h18v18h-18z" fill="#fff" stroke="#aaa" />{r(1, 0, 19, 4, DB)}{r(14, 4, 6, 16, '#cfdeee')}{r(8, 15, 6, 5, '#cfdeee')}<path d="M7.500 4v16M13.500 4v16M1 9.500h19M1 14.500h19" stroke="#aaa" /></> },
  { name: 'R-Skript-Visual', icon: <text x="2" y="20" fontSize="26" fontWeight="600" fill={B}>R</text> },

  { name: 'Wichtige Einflussfaktoren', icon: <><Axis /><path d="M2 6h9M2 11h6M2 15h5" stroke="#aaa" /><circle cx="10" cy="6" r="2" fill={D} /><circle cx="7" cy="11" r="2" fill={D} /><circle cx="5" cy="16" r="2" fill={D} /><circle cx="18" cy="2" r="2.200" fill={DB} /><circle cx="19" cy="17" r="3" fill={Y} /></> },
  { name: 'ArcGIS Maps', icon: <><circle cx="10.500" cy="10.500" r="9.800" fill="#fff" stroke="#aaa" strokeWidth="1.500" /><circle cx="10.500" cy="10.500" r="8" fill="#1d7cb8" /><path d="M4 7q4-5 7-4l-3 5 4 4-4 5q-4-4-4-10zM13 4l5 4-3 6-2-5z" fill="#3fa34a" /><path d="M3 9q8 6 14 0M5 15q6-5 11 0M10.500 3q-7 8 0 15M10.500 3q7 8 0 15" stroke="#d6ecf5" strokeWidth=".8" /></> },
  { name: 'Weitere', icon: <g fill="#333"><circle cx="2" cy="9" r="1.200" /><circle cx="10" cy="9" r="1.200" /><circle cx="18" cy="9" r="1.200" /></g> },
];

function PaneHeader({ title }: { title: string }) {
  return (
    <div className="flex items-center justify-between h-[62px] pl-[15px]">
      <h2 className="text-[18px] leading-6 font-semibold text-[#444]">{title}</h2>
      <button aria-label={`${title} reduzieren`}>
        <Chevron dir="right" w={8} h={14} />
      </button>
    </div>
  );
}

function Toggle({ label, on, onChange }: { label: string; on: boolean; onChange: () => void }) {
  return (
    <div>
      <div id={label} className="pl-[11px] leading-5">{label}</div>
      <label className="relative flex items-center gap-[6px] pl-[22px] mt-[17px] leading-5 w-fit">
        <span>{on ? 'Ein' : 'Aus'}</span>
        <input type="checkbox" role="switch" aria-labelledby={label} checked={on} onChange={onChange} className="absolute inset-0 opacity-0" />
        <svg width="37" height="16" fill="none" stroke="#605e5c">
          {on ? (
            <>
              <path d="M0 8h24" strokeWidth="2" />
              <circle cx="29" cy="8" r="7.500" fill="#605e5c" stroke="none" />
            </>
          ) : (
            <>
              <circle cx="7.500" cy="8" r="6" strokeWidth="3" />
              <path d="M15 8h22" strokeWidth="2" />
            </>
          )}
        </svg>
      </label>
    </div>
  );
}

function VisualizationsPane() {
  const [cross, setCross] = useState(false);
  const [keep, setKeep] = useState(true);

  return (
    <section className="w-[226px] shrink-0 bg-[#f3f2f1] border-l border-[#dcdcdc] text-[14px] text-[#252423]">
      <div className="pr-4">
        <PaneHeader title="Visualisierungen" />
      </div>
      <div className="grid grid-cols-[repeat(6,35px)] auto-rows-[30px] pl-1 pt-[2px] pb-[2px] border-b border-[#dcdcdc]">
        {visuals.map((v) => (
          <button
            key={v.name}
            aria-label={v.name}
            className={clsx('w-[27px] h-[27px] ml-1 flex items-center justify-center', v.name === 'Tabelle' && 'border-2 border-[#605e5c] bg-[#d8d6d4]')}
          >
            <svg width="21" height="21" viewBox="0 0 21 21" fill="none" className="overflow-visible shrink-0">{v.icon}</svg>
          </button>
        ))}
      </div>
      <div className="flex items-start pt-[9px] pl-[15px]">
        <button aria-label="Felder" className="w-[50px] flex flex-col items-center">
          <svg width="26" height="26" fill="none" stroke="#222" strokeWidth="1.300">
            <path d="M1 1h20" />
            <path d="M1 4.500h24v8H1zM1 16.500h24v8H1z" strokeDasharray="3 1.500" />
          </svg>
          <span className="mt-[5px] w-full h-[5px] rounded-full bg-[#f2c811]" />
        </button>
        <button aria-label="Format" className="ml-[13px]">
          <svg width="24" height="26" fill="none" stroke="#222" strokeWidth="1.300">
            <path d="M1 1.500h18v5H1zM19 3.500h4v6l-11 2v2.500M9 14h6v11.500H9z" />
          </svg>
        </button>
        <button aria-label="Analyse" className="ml-[25px]">
          <svg width="26" height="26" fill="none" stroke="#222" strokeWidth="1.400">
            <circle cx="11" cy="11" r="10" />
            <path d="M18 18l7 7M2 12l5-3 3 2 8-6M7 20v-6M11 20v-7M15 19v-8" />
          </svg>
        </button>
      </div>
      <div className="pl-[15px] mt-[7px] leading-5">Werte</div>
      <ul className="flex flex-col gap-[2px] ml-[5px] mr-2 mt-[6px] px-[3px] pt-1 pb-[11px] bg-white border border-dashed border-[#c2c0be] rounded-xs">
        {values.map((v) => (
          <li key={v} className="flex items-center h-[29px] pl-[5px] pr-1 bg-[#ebeae9] border border-[#c2c0be] rounded-xs">
            <span className="flex-1">{v}</span>
            <button aria-label={`${v} Menü`} className="mr-[7px]">
              <Chevron dir="down" w={14} h={8} />
            </button>
            <button aria-label={`${v} entfernen`}>
              <X s={11} color="#444" />
            </button>
          </li>
        ))}
      </ul>
      <h2 className="mt-[18px] pl-[17px] text-[18px] leading-6 font-semibold text-[#444]">Drillthrough</h2>
      <div className="flex flex-col gap-[23px] mt-5">
        <Toggle label="Berichtsübergreifend" on={cross} onChange={() => setCross(!cross)} />
        <Toggle label="Alle Filter beibehalten" on={keep} onChange={() => setKeep(!keep)} />
      </div>
      <div className="ml-[5px] mr-2 mt-4 h-[33px] flex items-center pl-[10px] bg-white border border-dashed border-[#c2c0be] rounded-xs whitespace-nowrap">
        Drillthroughfelder hier hinz...
      </div>
    </section>
  );
}

/* ---------- fields pane ---------- */

function FieldsPane() {
  const [open, setOpen] = useState(true);

  return (
    <section className="w-[222px] shrink-0 bg-[#f3f2f1] border-l border-[#dcdcdc] text-[14px] text-[#252423]">
      <div className="pr-3">
        <PaneHeader title="Felder" />
      </div>
      <div className="pl-[5px] pr-px pt-[3px] pb-[5px] border-b border-[#dcdcdc]">
        <label className="flex items-center h-[38px] pl-[14px] gap-[10px] bg-white border border-[#c2c0be] rounded-xs">
          <svg width="20" height="20" fill="none" stroke="#333" strokeWidth="1.300" className="shrink-0">
            <circle cx="13" cy="7" r="6" />
            <path d="M9 11.500L1 19.500" />
          </svg>
          <input aria-label="Suchen" placeholder="Suchen" className="w-full min-w-0 outline-none placeholder:text-[#333]" />
        </label>
      </div>
      <button onClick={() => setOpen(!open)} className="flex items-center mt-[13px] pl-[5px] h-7 font-semibold">
        <Chevron dir="up" w={15} h={9} />
        <svg width="24" height="24" fill="none" className="ml-[9px] mt-[6px]">
          <path d="M1 1h15v14H1zM1 7.500h15M1 11.500h15M6 4v11M11 4v11" stroke="#444" strokeWidth="1.200" />
          <path d="M0 0h17v4.500H0z" fill="#222" />
          <circle cx="16.500" cy="16" r="7.500" fill="#f2c811" />
          <path d="M13.500 16l2.200 2 3.800-4" stroke="#222" strokeWidth="1.800" />
        </svg>
        <span className="ml-[7px]">Warenkorb</span>
      </button>
      {open && (
        <ul className="mt-[9px]">
          {fields.map((f) => (
            <li key={f.name} className="h-[30px]">
              <label className="relative flex items-center h-full pl-10">
                <input type="checkbox" defaultChecked className="appearance-none w-[15px] h-[15px] rounded-xs bg-[#f2c811]" />
                <svg width="9" height="7" fill="none" stroke="#444" strokeWidth="1.200" className="absolute left-[43px] pointer-events-none">
                  <path d="M.5 3.500l2.500 2.500 5.500-5.500" />
                </svg>
                <span className="w-[31px] pl-[7px]">
                  {f.numeric && (
                    <svg width="11" height="12" fill="none" stroke="#222" strokeWidth="1.500">
                      <path d="M10 3V1H1.500l5 5-5.500 5h9.300V9" />
                    </svg>
                  )}
                </span>
                <span>{f.name}</span>
              </label>
            </li>
          ))}
        </ul>
      )}
    </section>
  );
}

export default function App() {
  return (
    <div className="flex flex-col h-screen min-h-[1100px] overflow-hidden bg-white border-t-2 border-r-4 border-t-[#777] border-r-[#b0b0b0] font-['Noto_Sans','Open_Sans',sans-serif]">
      <TitleBar />
      <RibbonTabs />
      <Ribbon />
      <QuickAccess />
      <div className="flex flex-1 min-h-0">
        <SideRail />
        <div className="flex flex-col flex-1 min-w-0">
          <div className="flex flex-1 min-h-0">
            <Canvas />
            <FilterPane />
          </div>
          <PageTabs />
        </div>
        <VisualizationsPane />
        <FieldsPane />
      </div>
      <footer className="h-7 shrink-0 bg-[#f3f2f1] border-b-2 border-[#8a8a8a] text-[13px] leading-[27px] text-[#444]">
        SEITE 1 VON 1
      </footer>
    </div>
  );
}
